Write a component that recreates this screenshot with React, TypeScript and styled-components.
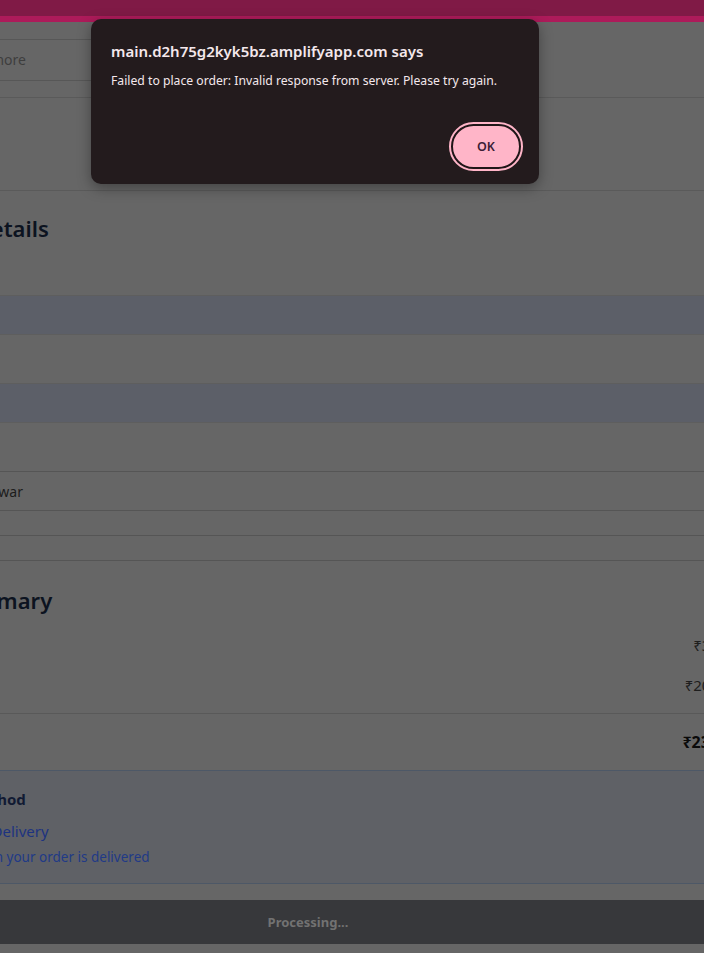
import styled, { createGlobalStyle } from 'styled-components';

const GlobalStyle = createGlobalStyle`
  html, body {
    margin: 0;
    padding: 0;
    background: #666666;
    font-family: "Noto Sans", "Open Sans", sans-serif;
    overflow: hidden;
  }
`;

const Viewport = styled.div`
  width: 704px;
  height: 953px;
  overflow: hidden;
  position: relative;
  background: #666666;
`;

const TopBar = styled.div`
  height: 16px;
  background: #801a46;
  border-bottom: 6px solid #ad1b5a;
`;

// the page is scrolled sideways, so its left part lies off screen
const Shifted = styled.div`
  margin-left: -135px;
  width: 870px;
`;

const SearchRow = styled.div`
  height: 75px;
  display: flex;
  align-items: center;
  padding: 0 16px;
  border-bottom: 1px solid #5a5a5a;
`;

const SearchInput = styled.div`
  width: 400px;
  height: 40px;
  margin-left: 43px;
  border-top: 1px solid #575757;
  border-bottom: 1px solid #575757;
  display: flex;
  align-items: center;
  padding-left: 14px;
  font-size: 14px;
  color: #3e3e3e;
  white-space: nowrap;
`;

const Steps = styled.div`
  height: 92px;
  border-bottom: 1px solid #5a5a5a;
`;

const Section = styled.section`
  padding: 0 16px;
`;

const SectionTitle = styled.h2`
  margin: 0;
  font-size: 22px;
  font-weight: 600;
  color: #0c1320;
  line-height: 32px;
  white-space: nowrap;
`;

const DetailsTitle = styled(SectionTitle)`
  padding-top: 21px;
  height: 104px;
  box-sizing: border-box;
`;

const Field = styled.div<{ $filled?: boolean; $h: number; $line?: boolean }>`
  height: ${(p) => p.$h}px;
  margin: 0 16px;
  background: ${(p) => (p.$filled ? '#5c5f68' : 'transparent')};
  border-top: 1px solid ${(p) => (p.$line ? '#555555' : '#5e5e5e')};
  box-sizing: border-box;
  display: flex;
  align-items: center;
  padding-left: 19px;
  font-size: 14px;
  color: #1c1c1c;
  white-space: nowrap;
`;

const Divider = styled.div`
  height: 1px;
  background: #555555;
`;

const Gap = styled.div<{ $h: number }>`
  height: ${(p) => p.$h}px;
`;

const SummaryTitle = styled(SectionTitle)`
  padding-top: 23px;
  height: 64px;
  box-sizing: border-box;
`;

const SummaryRow = styled.div<{ $total?: boolean }>`
  display: flex;
  justify-content: space-between;
  align-items: center;
  height: ${(p) => (p.$total ? 56 : 40)}px;
  font-size: ${(p) => (p.$total ? 16 : 15)}px;
  font-weight: ${(p) => (p.$total ? 700 : 400)};
  color: ${(p) => (p.$total ? '#0a0a0a' : '#1e1e1e')};
  border-top: ${(p) => (p.$total ? '1px solid #595959' : 'none')};
`;

const PaymentBox = styled.div`
  border-top: 1px solid #4d5867;
  border-bottom: 1px solid #4d5867;
  background: #5f6166;
  padding: 16px 16px 0;
  height: 114px;
  box-sizing: border-box;
  white-space: nowrap;
`;

const PaymentTitle = styled.div`
  font-size: 15px;
  font-weight: 700;
  color: #111a33;
  line-height: 24px;
`;

const PaymentOption = styled.label`
  margin-top: 8px;
  display: flex;
  align-items: center;
  gap: 16px;
  font-size: 15px;
  color: #1d3380;
  line-height: 24px;
`;

const Radio = styled.span`
  width: 18px;
  height: 18px;
  border-radius: 50%;
  border: 1px solid #1d3380;
  box-sizing: border-box;
`;

const PaymentNote = styled.div`
  margin-top: 4px;
  padding-left: 45px;
  font-size: 13.5px;
  color: #213a86;
  line-height: 20px;
`;

const SubmitBar = styled.div`
  margin-top: 16px;
  margin-left: 16px;
  height: 44px;
  background: #37383b;
  display: flex;
  align-items: center;
  justify-content: center;
  font-size: 13px;
  font-weight: 700;
  color: #727272;
`;

const Dialog = styled.div`
  position: absolute;
  left: 91px;
  top: 19px;
  width: 448px;
  height: 165px;
  box-sizing: border-box;
  background: #231b1d;
  border-radius: 10px;
  box-shadow: 0 4px 14px rgba(0, 0, 0, 0.35);
  padding: 22px 20px 16px;
  display: flex;
  flex-direction: column;
  color: #f4e8ec;
`;

const DialogTitle = styled.div`
  font-size: 15px;
  font-weight: 600;
  line-height: 20px;
`;

const DialogMessage = styled.div`
  margin-top: 10px;
  font-size: 12.2px;
  line-height: 20px;
`;

const DialogActions = styled.div`
  margin-top: auto;
  display: flex;
  justify-content: flex-end;
`;

const OkButton = styled.button`
  width: 70px;
  height: 45px;
  border-radius: 23px;
  background: #ffb5c8;
  border: 2px solid #201618;
  outline: 2px solid #ffb5c8;
  outline-offset: 0;
  margin-right: -2px;
  margin-bottom: -1px;
  font-family: "Noto Sans", sans-serif;
  font-size: 12.5px;
  font-weight: 600;
  color: #3c1d36;
`;

export default function App() {
  return (
    <>
      <GlobalStyle />
      <Viewport>
        <TopBar />
        <Shifted>
          <SearchRow>
            <SearchInput>Explore more</SearchInput>
          </SearchRow>
          <Steps />
          <Section>
            <DetailsTitle>Delivery Details</DetailsTitle>
          </Section>
          <Field $filled $h={39} />
          <Field $h={49} />
          <Field $filled $h={39} />
          <Field $h={49} />
          <Field $line $h={39}>Roorkee, Haridwar</Field>
          <Field $line $h={25} />
          <Field $line $h={25} />
          <Divider />
          <Section>
            <SummaryTitle>Order Summary</SummaryTitle>
            <SummaryRow>
              <span>Subtotal</span>
              <span>₹30</span>
            </SummaryRow>
            <SummaryRow>
              <span>Delivery Fee</span>
              <span>₹200</span>
            </SummaryRow>
            <Gap $h={8} />
            <SummaryRow $total>
              <span>Total</span>
              <span>₹230</span>
            </SummaryRow>
          </Section>
          <Section>
            <PaymentBox>
              <PaymentTitle>Payment Method</PaymentTitle>
              <PaymentOption>
                <Radio />
                Cash on Delivery
              </PaymentOption>
              <PaymentNote>Pay when your order is delivered</PaymentNote>
            </PaymentBox>
            <SubmitBar>Processing...</SubmitBar>
          </Section>
        </Shifted>
        <Dialog role="alertdialog">
          <DialogTitle>main.d2h75g2kyk5bz.amplifyapp.com says</DialogTitle>
          <DialogMessage>
            Failed to place order: Invalid response from server. Please try again.
          </DialogMessage>
          <DialogActions>
            <OkButton>OK</OkButton>
          </DialogActions>
        </Dialog>
      </Viewport>
    </>
  );
}
